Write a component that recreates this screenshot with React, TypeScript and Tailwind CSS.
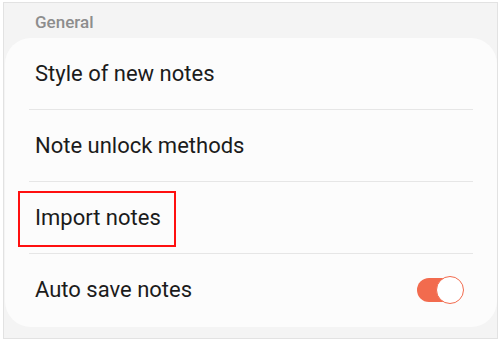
import React from 'react';

const rows = ['Style of new notes', 'Note unlock methods', 'Import notes', 'Auto save notes'];

function Toggle() {
  return (
    <div className="relative w-[47px] h-[28px]">
      <div className="absolute left-0 right-[2px] top-[2px] h-[24px] rounded-full bg-[#f26b4e]" />
      <div className="absolute right-0 top-0 w-[28px] h-[28px] rounded-full bg-white border-[1.5px] border-[#f26b4e]" />
    </div>
  );
}

export default function App() {
  return (
    <div className="w-[500px] h-[341px] bg-white pt-[2px] pl-[3px]" style={{ fontFamily: 'Roboto, "Noto Sans", sans-serif' }}>
      <div className="w-[495px] h-[337px] border border-[#e2e2e2] bg-[#f4f4f4] flex flex-col">
        {/* Section header */}
        <div className="h-[35px] pl-[31px] pt-[9px] text-[17px] font-medium text-[#8d8d8d] leading-[20px]">General</div>

        {/* Card */}
        <div className="ml-[1px] mr-0 h-[289px] rounded-[26px] bg-[#fcfcfc] px-[24px]">
          {rows.map((label, i) => (
            <div
              key={label}
              className={`relative h-[72px] flex items-center justify-between pl-[6px] pr-[9px] ${i < rows.length - 1 ? 'border-b border-[#e6e6e6]' : ''}`}
            >
              <span className="text-[22px] text-[#1b1b1b] leading-none">{label}</span>
              {i === 2 && (
                <div className="absolute left-[-11px] top-[9px] w-[158px] h-[56px] border-2 border-[#ff1010]" />
              )}
              {i === 3 && <Toggle />}
            </div>
          ))}
        </div>
      </div>
    </div>
  );
}
